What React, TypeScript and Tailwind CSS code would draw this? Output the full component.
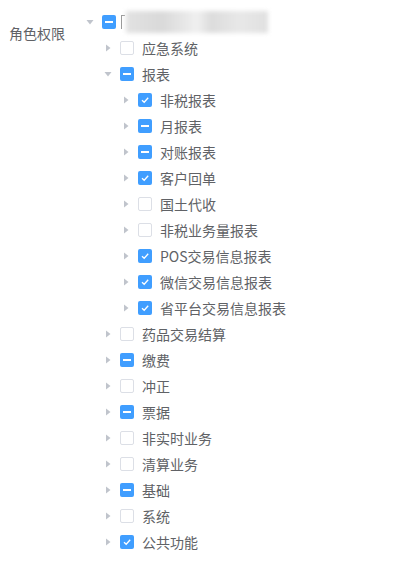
import React from 'react';

type CheckState = 'none' | 'checked' | 'half';

type Node = {
  label: string;
  level: number;
  state: CheckState;
  expanded?: boolean;
  blurred?: boolean;
};

const nodes: Node[] = [
  { label: '', level: 0, state: 'half', expanded: true, blurred: true },
  { label: '应急系统', level: 1, state: 'none' },
  { label: '报表', level: 1, state: 'half', expanded: true },
  { label: '非税报表', level: 2, state: 'checked' },
  { label: '月报表', level: 2, state: 'half' },
  { label: '对账报表', level: 2, state: 'half' },
  { label: '客户回单', level: 2, state: 'checked' },
  { label: '国土代收', level: 2, state: 'none' },
  { label: '非税业务量报表', level: 2, state: 'none' },
  { label: 'POS交易信息报表', level: 2, state: 'checked' },
  { label: '微信交易信息报表', level: 2, state: 'checked' },
  { label: '省平台交易信息报表', level: 2, state: 'checked' },
  { label: '药品交易结算', level: 1, state: 'none' },
  { label: '缴费', level: 1, state: 'half' },
  { label: '冲正', level: 1, state: 'none' },
  { label: '票据', level: 1, state: 'half' },
  { label: '非实时业务', level: 1, state: 'none' },
  { label: '清算业务', level: 1, state: 'none' },
  { label: '基础', level: 1, state: 'half' },
  { label: '系统', level: 1, state: 'none' },
  { label: '公共功能', level: 1, state: 'checked' },
];

const indent = ['pl-0', 'pl-[18px]', 'pl-[36px]'];

// expand caret
function Caret({ open }: { open?: boolean }) {
  return (
    <span className="w-6 h-[26px] flex items-center justify-center shrink-0">
      <svg width="8" height="8" viewBox="0 0 8 8" className={open ? 'rotate-90' : ''}>
        <path d="M2 0.5 L6.5 4 L2 7.5 Z" fill="#c0c4cc" />
      </svg>
    </span>
  );
}

function Checkbox({ state }: { state: CheckState }) {
  if (state === 'none') {
    return <span className="w-[14px] h-[14px] shrink-0 rounded-[2px] border border-[#dcdfe6] bg-white" />;
  }
  return (
    <span className="w-[14px] h-[14px] shrink-0 rounded-[2px] bg-[#409eff] flex items-center justify-center">
      {state === 'checked' ? (
        <svg width="10" height="10" viewBox="0 0 10 10">
          <path d="M2 5.2 L4.2 7.3 L8.2 2.8" stroke="#fff" strokeWidth="1.3" fill="none" />
        </svg>
      ) : (
        <span className="block w-[8px] h-[2px] bg-white" />
      )}
    </span>
  );
}

function TreeRow({ node }: { node: Node }) {
  return (
    <div className={`h-[26px] flex items-center ${indent[node.level]}`}>
      <Caret open={node.expanded} />
      <Checkbox state={node.state} />
      {node.blurred ? (
        <span className="ml-[5px] flex items-center">
          <span className="w-[4px] h-[14px] border-l border-t border-[#9a9a9a]" />
          <span className="ml-[1px] w-[142px] h-[22px] blur-[2px] bg-[linear-gradient(90deg,#e2e2e2_0%,#d9d9d9_25%,#e6e6e6_40%,#f0f0f0_50%,#dcdcdc_60%,#e8e8e8_80%,#e0e0e0_100%)]" />
        </span>
      ) : (
        <span className="ml-2 text-[14px] text-[#606266] leading-[26px] whitespace-nowrap">{node.label}</span>
      )}
    </div>
  );
}

export default function App() {
  return (
    <div className="w-[420px] h-[585px] bg-white flex font-['Noto_Sans_CJK_SC','Noto_Sans',sans-serif]">
      <div className="w-[78px] shrink-0 pl-[9px] pt-[20px]">
        <span className="text-[14px] leading-5 text-[#606266]">角色权限</span>
      </div>
      <div className="pt-[9px] flex flex-col">
        {nodes.map((n, i) => (
          <TreeRow key={i} node={n} />
        ))}
      </div>
    </div>
  );
}
